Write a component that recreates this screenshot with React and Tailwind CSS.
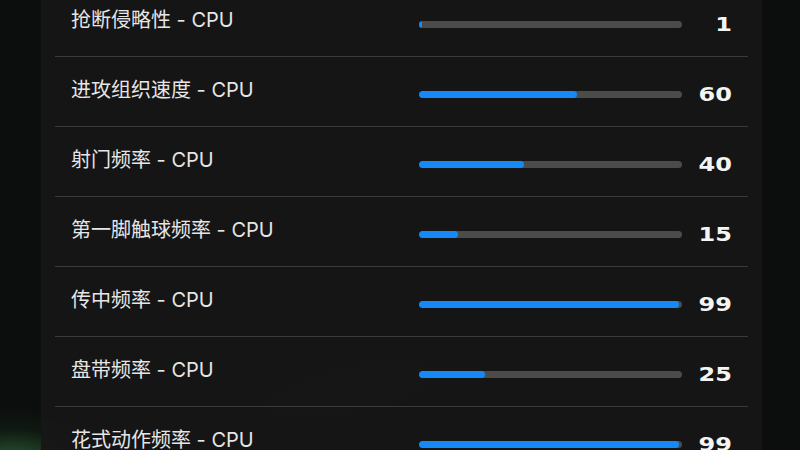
const rows = [
  { label: "抢断侵略性 - CPU", value: 1 },
  { label: "进攻组织速度 - CPU", value: 60 },
  { label: "射门频率 - CPU", value: 40 },
  { label: "第一脚触球频率 - CPU", value: 15 },
  { label: "传中频率 - CPU", value: 99 },
  { label: "盘带频率 - CPU", value: 25 },
  { label: "花式动作频率 - CPU", value: 99 },
];

export default function App() {
  return (
    <div className="relative w-[800px] h-[450px] overflow-hidden bg-[#0c0d0d]">
      <div className="absolute -left-[120px] top-[405px] w-[260px] h-[120px] rounded-full bg-[radial-gradient(closest-side,rgba(70,150,80,0.6),rgba(20,60,30,0.25)_60%,transparent)]" />
      <div className="absolute left-[100px] top-[320px] w-[500px] h-[140px] -rotate-12 bg-[radial-gradient(closest-side,rgba(40,70,45,0.15),transparent)]" />
      <div className="relative flex h-full">
        <div className="w-[41px] shrink-0" />
        <div className="w-[721px] shrink-0 h-full bg-[#161616]/95 px-[14px]">
          <div className="-mt-[13px] flex flex-col">
            {rows.map((r, i) => (
              <div key={i} className="h-[70px] shrink-0 border-b border-[#3b3b3b] flex items-center pt-[6px] pl-[16px] pr-[16px]">
                <div className="flex-1 pb-[9px] text-[20px] leading-none text-[#e6e6e6] font-['Inter','Noto_Sans_CJK_SC',sans-serif]">
                  {r.label}
                </div>
                <div className="w-[263px] h-[7px] rounded-full bg-[#4b4b49] overflow-hidden">
                  <div className="h-full rounded-full bg-[#1689f7]" style={{ width: `${Math.max(r.value, 1)}%` }} />
                </div>
                <div className="w-[50px] text-right">
                  <span className="inline-block origin-right scale-x-[1.2] text-[20px] leading-none font-bold text-[#f4f4f4] font-['DejaVu_Sans',sans-serif]">
                    {r.value}
                  </span>
                </div>
              </div>
            ))}
          </div>
        </div>
      </div>
    </div>
  );
}
